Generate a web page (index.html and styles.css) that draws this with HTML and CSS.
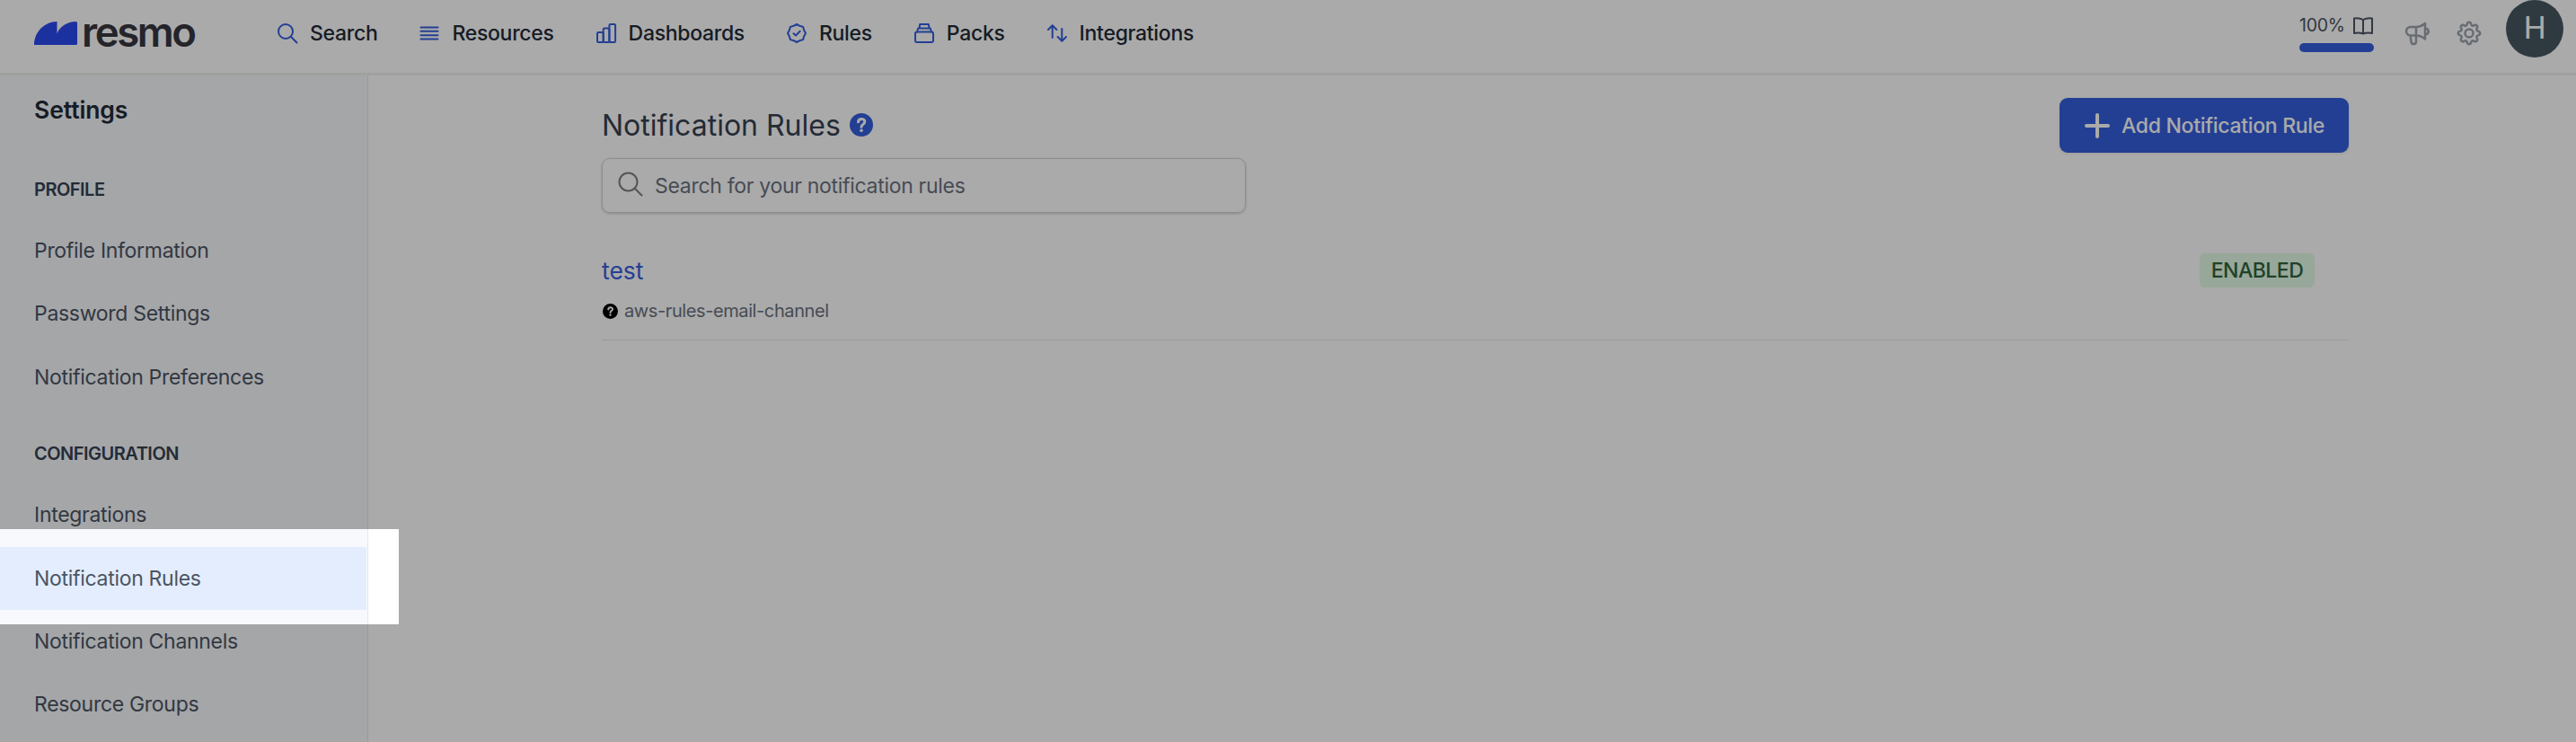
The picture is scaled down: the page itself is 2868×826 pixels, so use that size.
FILE: index.html
```html
<!DOCTYPE html>
<html lang="en">
<head>
<meta charset="utf-8">
<title>Notification Rules</title>
<link rel="stylesheet" href="styles.css">
</head>
<body>
<header class="topbar">
  <a class="brand" aria-label="resmo">
    <svg class="brand-mark" width="48" height="26" viewBox="0 0 48 26"><path d="M0 26C0 11.600 11.600 0 25.500 0V13.500C28.500 5.500 37 0 46.500 0Q48 0 48 1.500V24.500Q48 26 46.500 26Z" fill="#2b4af0"/></svg>
    <span class="brand-name">resmo</span>
  </a>
  <nav class="nav">
    <a class="nav-item nav-search"><svg class="icon" viewBox="0 0 24 24"><circle cx="10" cy="10" r="8"/><path d="M15.800 15.800L22.500 22.500"/></svg>Search</a>
    <a class="nav-item nav-resources"><svg class="icon" viewBox="0 0 24 24"><path d="M2.500 5.500H21.500M2.500 9.800H21.500M2.500 14.200H21.500M2.500 18.500H21.500"/></svg>Resources</a>
    <a class="nav-item nav-dashboards"><svg class="icon" viewBox="0 0 24 24"><rect x="2" y="11" width="6.700" height="11" rx="1.200"/><rect x="8.700" y="6.500" width="6.700" height="15.500" rx="1.200"/><rect x="15.400" y="2" width="6.700" height="20" rx="1.200"/></svg>Dashboards</a>
    <a class="nav-item nav-rules"><svg class="icon" viewBox="0 0 24 24"><path d="M12 2L15.300 3.800L19.100 4.900L20.200 8.700L22 12L20.200 15.300L19.100 19.100L15.300 20.200L12 22L8.700 20.200L4.900 19.100L3.800 15.300L2 12L3.800 8.700L4.900 4.900L8.700 3.800Z"/><path d="M8.500 12.200L11 14.500L15.700 9.800"/></svg>Rules</a>
    <a class="nav-item nav-packs"><svg class="icon" viewBox="0 0 24 24"><rect x="2" y="10.500" width="20" height="11.500" rx="2"/><path d="M4 10.500L5.200 6.500H18.800L20 10.500M6.500 6.500L7.200 2H16.800L17.500 6.500"/></svg>Packs</a>
    <a class="nav-item nav-integrations"><svg class="icon" viewBox="0 0 24 24"><path d="M6.700 17V3.500M2 8L6.700 3.300L11.400 8M17.300 7V20.500M12.600 16L17.300 20.700L22 16"/></svg>Integrations</a>
  </nav>
  <div class="tools">
    <div class="progress">
      <div class="progress-label">100%<svg class="book" viewBox="0 0 24 20"><path d="M12 3C9 1.300 5 1 2 1.500V18C5 17.400 9 17.500 12 18.500C15 17.500 19 17.400 22 18V1.500C19 1 15 1.300 12 3ZM12 3V18.500"/></svg></div>
      <div class="progress-bar"></div>
    </div>
    <svg class="tool-icon" viewBox="0 0 28 28"><path d="M13 7H7C4 7 2 9 2 11.800S4 16.500 7 16.500H13C17 16.500 20 18 23 20.500V3C20 5.500 17 7 13 7ZM13 7V23C13 27 8 27 7.500 23.500L6.500 16.500M23 8.500C28 9 28 15 23 15.500"/></svg>
    <svg class="tool-icon gear" viewBox="0 0 28 28"><path d="M11.600 4.200C12.300 1 15.700 1 16.400 4.200C16.700 5.600 18 6.100 19.200 5.400C22 3.700 24.300 6 22.600 8.800C21.900 10 22.400 11.300 23.800 11.600C27 12.300 27 15.700 23.800 16.400C22.400 16.700 21.900 18 22.600 19.200C24.300 22 22 24.300 19.200 22.600C18 21.900 16.700 22.400 16.400 23.800C15.700 27 12.300 27 11.600 23.800C11.300 22.400 10 21.900 8.800 22.600C6 24.300 3.700 22 5.400 19.200C6.100 18 5.600 16.700 4.200 16.400C1 15.700 1 12.300 4.200 11.600C5.600 11.300 6.100 10 5.400 8.800C3.700 6 6 3.700 8.800 5.400C10 6.100 11.300 5.600 11.600 4.200Z"/><circle cx="14" cy="14" r="4.500"/></svg>
    <div class="avatar">H</div>
  </div>
</header>
<div class="layout">
  <aside class="sidebar">
    <h2 class="sidebar-title">Settings</h2>
    <section class="group">
      <h3 class="group-title">PROFILE</h3>
      <a class="side-link">Profile Information</a>
      <a class="side-link">Password Settings</a>
      <a class="side-link">Notification Preferences</a>
    </section>
    <section class="group">
      <h3 class="group-title">CONFIGURATION</h3>
      <a class="side-link">Integrations</a>
      <a class="side-link active">Notification Rules</a>
      <a class="side-link">Notification Channels</a>
      <a class="side-link">Resource Groups</a>
    </section>
  </aside>
  <main class="content">
    <div class="page-head">
      <div class="head-left">
        <h1 class="page-title">Notification Rules<svg class="help" viewBox="0 0 26 26"><circle cx="13" cy="13" r="13"/><path d="M9.500 9.800C9.800 5.300 16.800 5.300 16.800 9.600C16.800 12.400 13 12.300 13 15.200"/><circle class="dot" cx="13" cy="19.300" r="1.800"/></svg></h1>
        <div class="search-box"><svg class="search-icon" viewBox="0 0 28 28"><circle cx="11.500" cy="11.500" r="10"/><path d="M18.700 18.700L26.500 26.500"/></svg>Search for your notification rules</div>
      </div>
      <a class="add-button"><svg class="plus" viewBox="0 0 28 28"><path d="M14 2V26M2 14H26"/></svg>Add Notification Rule</a>
    </div>
    <article class="rule">
      <div class="rule-info">
        <a class="rule-name">test</a>
        <div class="channel"><svg class="help small" viewBox="0 0 26 26"><circle cx="13" cy="13" r="13"/><path d="M9.500 9.800C9.800 5.300 16.800 5.300 16.800 9.600C16.800 12.400 13 12.300 13 15.200"/><circle class="dot" cx="13" cy="19.300" r="1.800"/></svg>aws-rules-email-channel</div>
      </div>
      <span class="badge">ENABLED</span>
    </article>
  </main>
</div>
<div class="spotlight"></div>
</body>
</html>
```
FILE: styles.css
```css
* { box-sizing: border-box; margin: 0; }
body {
  position: relative;
  height: 826px;
  overflow: hidden;
  background: #fff;
  color: #4b5563;
  font-family: Inter, sans-serif;
  letter-spacing: -.3px;
}
svg { flex: none; fill: none; stroke-linecap: round; stroke-linejoin: round; }

.topbar {
  display: flex;
  height: 84px;
  padding-left: 38px;
  border-bottom: 3px solid #f1f1f1;
}
.brand { display: flex; width: 270px; padding-top: 24px; gap: 5px; }
.brand-name {
  margin-top: -12px;
  font-size: 45.500px;
  line-height: 48px;
  font-weight: 600;
  letter-spacing: -2.400px;
  color: #38373f;
}
.nav { display: flex; align-items: center; height: 74px; gap: 46px; }
.nav-item {
  display: flex;
  align-items: center;
  gap: 13px;
  font-size: 23px;
  font-weight: 500;
  color: #222a37;
}
.icon { width: 24px; height: 24px; stroke: #355fde; stroke-width: 2; }

.tools { display: flex; margin-left: auto; padding-right: 14px; }
.progress { width: 83px; margin-right: 34px; padding-top: 16px; }
.progress-label { display: flex; align-items: center; justify-content: space-between; height: 24px; font-size: 19.500px; }
.book { width: 24px; height: 20px; margin-top: 2px; stroke: #4b5563; stroke-width: 2; }
.progress-bar { height: 10px; margin-top: 8px; border-radius: 5px; background: #355fde; }
.tool-icon { width: 28px; height: 28px; margin: 23px 30px 0 0; stroke: #9ca3af; stroke-width: 2.500; }
.gear { margin-right: 27px; }
.avatar {
  width: 64px;
  height: 64px;
  border-radius: 50%;
  background: #465761;
  color: #fff;
  font: 35px/64px Roboto, sans-serif;
  text-align: center;
}

.layout { display: flex; height: 742px; }
.sidebar { width: 410px; flex: none; border-right: 1px solid #e5e7eb; background: #f8f9fc; }
.sidebar-title { height: 94px; padding: 20px 0 0 38px; font-size: 26.500px; line-height: 36px; font-weight: 600; letter-spacing: -.1px; color: #222a37; }
.group { display: flex; flex-direction: column; margin-bottom: 17px; }
.group-title { padding-left: 38px; font-size: 20px; line-height: 66px; font-weight: 600; letter-spacing: -.5px; color: #374151; }
.side-link { height: 70.400px; margin-right: 1px; padding-left: 38px; font-size: 23px; line-height: 70px; }
.active { background: #e4edfd; }

.content { width: 1945px; margin-left: 260px; padding-top: 25px; }
.page-head { display: flex; justify-content: space-between; align-items: flex-start; }
.page-title { display: flex; align-items: center; gap: 10px; height: 62px; padding-bottom: 2px; font-size: 32px; font-weight: 400; letter-spacing: 0; color: #374151; }
.help { width: 26px; height: 26px; fill: #355fde; }
.help path { fill: none; stroke: #fff; stroke-width: 3; }
.help .dot { fill: #fff; }
.search-box {
  display: flex;
  align-items: center;
  width: 717px;
  height: 61px;
  margin-top: 5px;
  padding-left: 17px;
  gap: 13px;
  border: 1px solid #d1d5db;
  border-radius: 9px;
  box-shadow: 0 1px 3px rgba(0, 0, 0, .2);
  font-size: 23px;
  color: #6b7280;
}
.search-icon { width: 28px; height: 28px; margin-top: -4px; stroke: #808080; stroke-width: 2; }
.add-button {
  display: flex;
  align-items: center;
  width: 322px;
  height: 61px;
  padding-left: 28px;
  gap: 13px;
  border-radius: 9px;
  background: #355fde;
  box-shadow: 0 1px 3px rgba(0, 0, 0, .1);
  color: #fff;
  font-size: 23px;
  font-weight: 500;
}
.plus { width: 28px; height: 28px; stroke: #fff; stroke-width: 4; }
.rule {
  display: flex;
  justify-content: space-between;
  height: 142px;
  padding: 45px 38px 0 0;
  border-bottom: 1px solid #e5e7eb;
}
.rule-name { display: block; font-size: 26.500px; line-height: 38px; letter-spacing: 0; color: #355fde; }
.channel { display: flex; align-items: center; gap: 7px; height: 30px; margin-top: 11px; padding-left: 1px; font-size: 20px; letter-spacing: -.4px; color: #6b7280; }
.small { width: 17px; height: 17px; fill: #000; }
.badge { width: 128px; height: 38px; border-radius: 6px; background: #e3fbe8; color: #30643a; font-size: 23px; line-height: 38px; font-weight: 500; letter-spacing: -.5px; text-align: center; }

.spotlight {
  position: absolute;
  left: 0;
  top: 589px;
  width: 444px;
  height: 106px;
  box-shadow: 0 0 0 3000px rgba(0, 0, 0, .333);
}
```
